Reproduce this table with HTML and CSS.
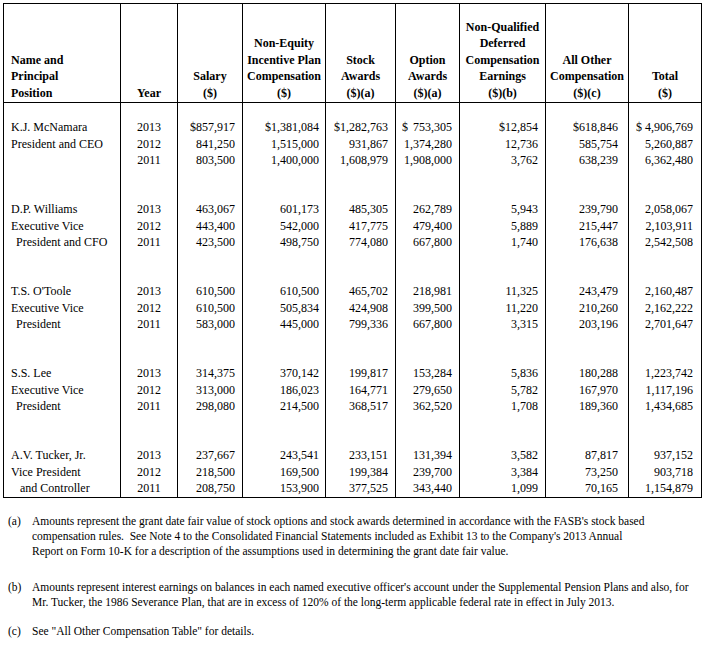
FILE: index.html
```html
<!DOCTYPE html>
<html>
<head>
<meta charset="utf-8">
<link rel="stylesheet" href="styles.css">
</head>
<body>
<table class="comp">
  <colgroup>
    <col class="c-name"><col class="c-year"><col class="c-sal"><col class="c-nei"><col class="c-stk"><col class="c-opt"><col class="c-nqd"><col class="c-oth"><col class="c-tot">
  </colgroup>
  <thead>
    <tr>
      <th class="left">Name and<br>Principal<br>Position</th>
      <th>Year</th>
      <th>Salary<br>($)</th>
      <th>Non-Equity<br>Incentive Plan<br>Compensation<br>($)</th>
      <th>Stock<br>Awards<br>($)(a)</th>
      <th>Option<br>Awards<br>($)(a)</th>
      <th>Non-Qualified<br>Deferred<br>Compensation<br>Earnings<br>($)(b)</th>
      <th>All Other<br>Compensation<br>($)(c)</th>
      <th>Total<br>($)</th>
    </tr>
  </thead>
  <tbody>
    <tr class="sp"><td></td><td></td><td></td><td></td><td></td><td></td><td></td><td></td><td></td></tr>
    <tr><td class="nm">K.J. McNamara</td><td class="yr">2013</td><td>$857,917</td><td class="nei">$1,381,084</td><td>$1,282,763</td><td><span class="cur">$</span>753,305</td><td>$12,854</td><td class="oth">$618,846</td><td class="tot"><span class="cur">$</span>4,906,769</td></tr>
    <tr><td class="nm">President and CEO</td><td class="yr">2012</td><td>841,250</td><td class="nei">1,515,000</td><td>931,867</td><td>1,374,280</td><td>12,736</td><td class="oth">585,754</td><td class="tot">5,260,887</td></tr>
    <tr><td class="nm"></td><td class="yr">2011</td><td>803,500</td><td class="nei">1,400,000</td><td>1,608,979</td><td>1,908,000</td><td>3,762</td><td class="oth">638,239</td><td class="tot">6,362,480</td></tr>
    <tr class="sp"><td></td><td></td><td></td><td></td><td></td><td></td><td></td><td></td><td></td></tr>
    <tr class="sp"><td></td><td></td><td></td><td></td><td></td><td></td><td></td><td></td><td></td></tr>
    <tr><td class="nm">D.P. Williams</td><td class="yr">2013</td><td>463,067</td><td class="nei">601,173</td><td>485,305</td><td>262,789</td><td>5,943</td><td class="oth">239,790</td><td class="tot">2,058,067</td></tr>
    <tr><td class="nm">Executive Vice</td><td class="yr">2012</td><td>443,400</td><td class="nei">542,000</td><td>417,775</td><td>479,400</td><td>5,889</td><td class="oth">215,447</td><td class="tot">2,103,911</td></tr>
    <tr><td class="nm ind1">President and CFO</td><td class="yr">2011</td><td>423,500</td><td class="nei">498,750</td><td>774,080</td><td>667,800</td><td>1,740</td><td class="oth">176,638</td><td class="tot">2,542,508</td></tr>
    <tr class="sp"><td></td><td></td><td></td><td></td><td></td><td></td><td></td><td></td><td></td></tr>
    <tr class="sp"><td></td><td></td><td></td><td></td><td></td><td></td><td></td><td></td><td></td></tr>
    <tr><td class="nm">T.S. O'Toole</td><td class="yr">2013</td><td>610,500</td><td class="nei">610,500</td><td>465,702</td><td>218,981</td><td>11,325</td><td class="oth">243,479</td><td class="tot">2,160,487</td></tr>
    <tr><td class="nm">Executive Vice</td><td class="yr">2012</td><td>610,500</td><td class="nei">505,834</td><td>424,908</td><td>399,500</td><td>11,220</td><td class="oth">210,260</td><td class="tot">2,162,222</td></tr>
    <tr><td class="nm ind1">President</td><td class="yr">2011</td><td>583,000</td><td class="nei">445,000</td><td>799,336</td><td>667,800</td><td>3,315</td><td class="oth">203,196</td><td class="tot">2,701,647</td></tr>
    <tr class="sp"><td></td><td></td><td></td><td></td><td></td><td></td><td></td><td></td><td></td></tr>
    <tr class="sp"><td></td><td></td><td></td><td></td><td></td><td></td><td></td><td></td><td></td></tr>
    <tr><td class="nm">S.S. Lee</td><td class="yr">2013</td><td>314,375</td><td class="nei">370,142</td><td>199,817</td><td>153,284</td><td>5,836</td><td class="oth">180,288</td><td class="tot">1,223,742</td></tr>
    <tr><td class="nm">Executive Vice</td><td class="yr">2012</td><td>313,000</td><td class="nei">186,023</td><td>164,771</td><td>279,650</td><td>5,782</td><td class="oth">167,970</td><td class="tot">1,117,196</td></tr>
    <tr><td class="nm ind1">President</td><td class="yr">2011</td><td>298,080</td><td class="nei">214,500</td><td>368,517</td><td>362,520</td><td>1,708</td><td class="oth">189,360</td><td class="tot">1,434,685</td></tr>
    <tr class="sp"><td></td><td></td><td></td><td></td><td></td><td></td><td></td><td></td><td></td></tr>
    <tr class="sp"><td></td><td></td><td></td><td></td><td></td><td></td><td></td><td></td><td></td></tr>
    <tr><td class="nm">A.V. Tucker, Jr.</td><td class="yr">2013</td><td>237,667</td><td class="nei">243,541</td><td>233,151</td><td>131,394</td><td>3,582</td><td class="oth">87,817</td><td class="tot">937,152</td></tr>
    <tr><td class="nm">Vice President</td><td class="yr">2012</td><td>218,500</td><td class="nei">169,500</td><td>199,384</td><td>239,700</td><td>3,384</td><td class="oth">73,250</td><td class="tot">903,718</td></tr>
    <tr><td class="nm ind2">and Controller</td><td class="yr">2011</td><td>208,750</td><td class="nei">153,900</td><td>377,525</td><td>343,440</td><td>1,099</td><td class="oth">70,165</td><td class="tot">1,154,879</td></tr>
  </tbody>
</table>

<div class="notes">
  <div class="note note-a"><span class="lbl">(a)</span><span class="txt">Amounts represent the grant date fair value of stock options and stock awards determined in accordance with the FASB's stock based<br>compensation rules.&nbsp; See Note 4 to the Consolidated Financial Statements included as Exhibit 13 to the Company's 2013 Annual<br>Report on Form 10-K for a description of the assumptions used in determining the grant date fair value.</span></div>
  <div class="note note-b"><span class="lbl">(b)</span><span class="txt">Amounts represent interest earnings on balances in each named executive officer's account under the Supplemental Pension Plans and also, for<br>Mr. Tucker, the 1986 Severance Plan, that are in excess of 120% of the long-term applicable federal rate in effect in July 2013.</span></div>
  <div class="note note-c"><span class="lbl">(c)</span><span class="txt">See "All Other Compensation Table" for details.</span></div>
</div>
</body>
</html>
```

FILE: styles.css
```css
html, body {
  margin: 0;
  padding: 0;
  background: #fff;
}
body {
  padding: 3px 0 0 3px;
  font-family: "Liberation Serif", "Times New Roman", serif;
  color: #000;
}
.comp {
  border-collapse: collapse;
  table-layout: fixed;
  width: 699px;
  border: 1px solid #000;
}
.c-name { width: 117px; }
.c-year { width: 57px; }
.c-sal { width: 65px; }
.c-nei { width: 83px; }
.c-stk { width: 70px; }
.c-opt { width: 64px; }
.c-nqd { width: 86px; }
.c-oth { width: 83px; }
.c-tot { width: 73px; }

.comp th {
  font-weight: bold;
  font-size: 12px;
  line-height: 16.5px;
  height: 97px;
  vertical-align: bottom;
  text-align: center;
  padding: 0 0 1px 0;
  border-left: 1px solid #000;
  border-right: 1px solid #000;
  border-bottom: 1px solid #000;
  white-space: nowrap;
}
.comp th.left {
  text-align: left;
  padding-left: 7px;
}
.comp td {
  font-size: 12px;
  line-height: 16.4px;
  height: 16.4px;
  padding: 0 7px 0 0;
  text-align: right;
  border-left: 1px solid #000;
  border-right: 1px solid #000;
  white-space: nowrap;
  vertical-align: middle;
}
.comp td.nm {
  text-align: left;
  padding: 0 0 0 7px;
}
.comp td.ind1 { padding-left: 12px; }
.comp td.ind2 { padding-left: 16px; }
.comp td.yr {
  text-align: center;
  padding: 0;
}
.comp td.nei { padding-right: 6px; }
.comp td.oth { padding-right: 10px; }
.comp td.tot { padding-right: 8px; }
.cur {
  float: left;
  padding-left: 6px;
}
.tot .cur { padding-left: 7px; }

.notes {
  padding: 16px 0 0 5px;
  font-size: 11.5px;
  line-height: 15px;
}
.note {
  display: flex;
  white-space: nowrap;
}
.note-b { margin-top: 21px; }
.note-c { margin-top: 14px; }
.lbl {
  width: 24px;
  flex: none;
}
```
